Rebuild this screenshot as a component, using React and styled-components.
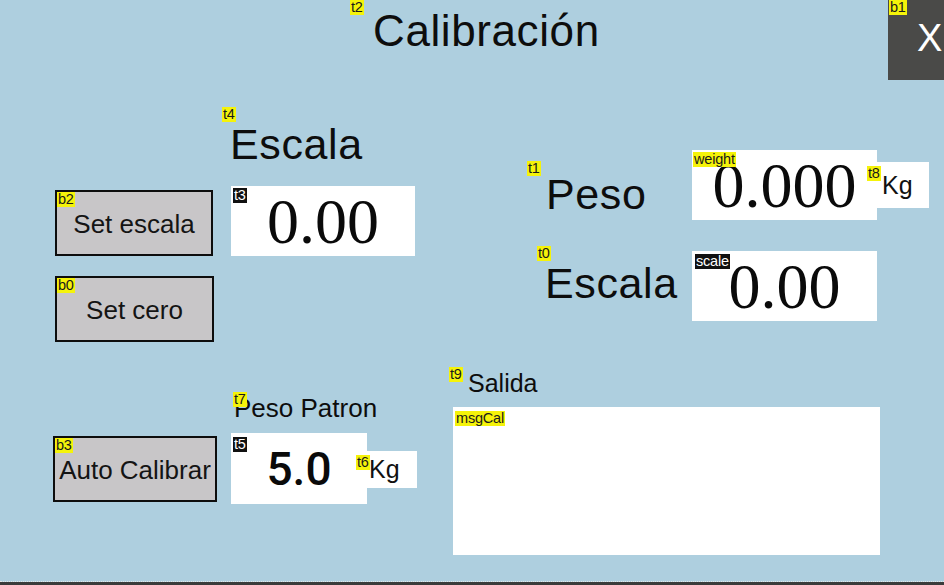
import React from "react";
import styled, { createGlobalStyle } from "styled-components";

const Global = createGlobalStyle`
  html, body { margin: 0; padding: 0; background: #3b3b3b; }
  body { width: 944px; height: 585px; overflow: hidden; font-family: "Liberation Sans", Arial, sans-serif; }
`;

const Page = styled.div`
  width: 944px;
  height: 585px;
  display: flex;
  flex-direction: column;
  background: #3b3b3b;
`;

const Canvas = styled.div`
  width: 944px;
  height: 581px;
  flex: none;
  display: flex;
  flex-direction: column;
  background: #aecfdf;
  border-bottom: 1px dotted #e6e6e6;
  overflow: hidden;
`;

const Header = styled.header`
  height: 107px;
  flex: none;
  display: flex;
  align-items: flex-start;
  padding-left: 350px;
`;

const Body = styled.main`
  flex: 1;
  display: flex;
  align-items: flex-start;
  padding-left: 53px;
`;

const LeftColumn = styled.section`
  width: 164px;
  display: flex;
  flex-direction: column;
  align-items: flex-start;
  gap: 20px;
  padding-top: 83px;
`;

const MiddleColumn = styled.section`
  width: 195px;
  margin-left: 5px;
  display: flex;
  flex-direction: column;
  align-items: flex-start;
`;

const RightColumn = styled.section`
  margin-left: 32px;
  width: 480px;
  display: flex;
  flex-direction: column;
  align-items: flex-start;
`;

const ReadingRow = styled.div`
  display: grid;
  grid-template-columns: 243px 185px 52px;
  align-items: start;
  margin-top: ${(p) => p.$mt}px;
`;

const UnitRow = styled.div`
  display: flex;
  align-items: flex-start;
  margin: 12px 0 0 9px;
`;

/* Editor id tag drawn over the top-left corner of each widget */
const Badge = styled.span`
  position: absolute;
  left: ${(p) => p.$l ?? 0}px;
  top: ${(p) => p.$t ?? 0}px;
  padding: 0 1px;
  height: 15px;
  line-height: 15px;
  font-family: "Liberation Sans", Arial, sans-serif;
  font-size: 14.5px;
  letter-spacing: -0.2px;
  background: ${(p) => (p.$dark ? "#111" : "#f5f30a")};
  color: ${(p) => (p.$dark ? "#fff" : "#1a1a1a")};
  z-index: 2;
  white-space: nowrap;
`;

const Label = styled.div`
  position: relative;
  padding: ${(p) => p.$pt}px 0 0 ${(p) => p.$pl}px;
  margin: ${(p) => p.$m ?? "0"};
  font-size: ${(p) => p.$fs}px;
  line-height: 1;
  color: #0d0d0d;
  white-space: nowrap;
  letter-spacing: ${(p) => p.$ls ?? 0}px;
`;

const ValueBox = styled.div`
  position: relative;
  width: ${(p) => p.$w}px;
  height: ${(p) => p.$h}px;
  margin: ${(p) => p.$m ?? "0"};
  background: #fff;
  display: flex;
  align-items: center;
  justify-content: center;
  white-space: nowrap;
`;

const SerifNumber = styled.span`
  font-family: "Liberation Serif", "Times New Roman", serif;
  font-size: 64px;
  line-height: 1;
  color: #0a0a0a;
  padding-top: 2px;
`;

const SansNumber = styled.span`
  font-family: Roboto, "Liberation Sans", sans-serif;
  font-weight: 500;
  font-size: 46px;
  line-height: 1;
  color: #0a0a0a;
`;

const UnitBox = styled.div`
  position: relative;
  width: ${(p) => p.$w}px;
  height: ${(p) => p.$h}px;
  margin-top: ${(p) => p.$mt}px;
  background: #fff;
  display: flex;
  align-items: center;
  padding-left: ${(p) => p.$pl}px;
  box-sizing: border-box;
  font-size: 25px;
  line-height: 1;
  color: #111;
`;

const Button = styled.button`
  position: relative;
  width: ${(p) => p.$w}px;
  height: 66px;
  margin: ${(p) => p.$m ?? "0"};
  box-sizing: border-box;
  background: #c8c6c8;
  border: 2px solid #0d0d0d;
  border-radius: 0;
  display: flex;
  align-items: center;
  justify-content: center;
  padding: 3px 0 0;
  font-family: "Liberation Sans", Arial, sans-serif;
  font-size: 26px;
  color: #141414;
  white-space: nowrap;
`;

const CloseButton = styled.button`
  position: relative;
  margin-left: auto;
  width: 56px;
  height: 80px;
  background: #4a4a48;
  border: none;
  border-radius: 0;
  display: flex;
  align-items: center;
  padding: 0 0 4px 29px;
  font-family: "Liberation Sans", Arial, sans-serif;
  font-size: 38px;
  color: #fff;
`;

const MessageBox = styled.div`
  position: relative;
  width: 427px;
  height: 148px;
  margin: 11px 0 0 4px;
  background: #fff;
`;

export default function App() {
  return (
    <>
      <Global />
      <Page>
        <Canvas>
          <Header>
            <Label $pl={23} $pt={9} $fs={44} $ls={0.6}>
              <Badge>t2</Badge>
              Calibración
            </Label>
            <CloseButton>
              <Badge $l={1}>b1</Badge>
              X
            </CloseButton>
          </Header>

          <Body>
            <LeftColumn>
              <Button $w={158} $m="0 0 0 2px">
                <Badge>b2</Badge>
                Set escala
              </Button>
              <Button $w={159} $m="0 0 0 2px">
                <Badge>b0</Badge>
                Set cero
              </Button>
              <Button $w={164} $m="74px 0 0 0">
                <Badge>b3</Badge>
                Auto Calibrar
              </Button>
            </LeftColumn>

            <MiddleColumn>
              <Label $pl={8} $pt={16} $fs={43} $ls={0.6}>
                <Badge>t4</Badge>
                Escala
              </Label>
              <ValueBox $w={184} $h={70} $m="20px 0 0 9px">
                <Badge $dark $l={2} $t={2}>t3</Badge>
                <SerifNumber>0.00</SerifNumber>
              </ValueBox>
              <Label $pl={1} $pt={3} $fs={26} $m="136px 0 0 11px">
                <Badge>t7</Badge>
                Peso Patron
              </Label>
              <UnitRow>
                <ValueBox $w={136} $h={71}>
                  <Badge $dark $l={2} $t={4}>t5</Badge>
                  <SansNumber>5.0</SansNumber>
                </ValueBox>
                <UnitBox $w={50} $h={37} $mt={18} $pl={2}>
                  <Badge $l={-11} $t={4}>t6</Badge>
                  Kg
                </UnitBox>
              </UnitRow>
            </MiddleColumn>

            <RightColumn>
              <ReadingRow $mt={43}>
                <Label $pl={19} $pt={12} $fs={43} $ls={0.6} $m="11px 0 0 78px">
                  <Badge>t1</Badge>
                  Peso
                </Label>
                <ValueBox $w={185} $h={70}>
                  <Badge $l={1} $t={2}>weight</Badge>
                  <SerifNumber>0.000</SerifNumber>
                </ValueBox>
                <UnitBox $w={52} $h={46} $mt={12} $pl={5}>
                  <Badge $l={-10} $t={4}>t8</Badge>
                  Kg
                </UnitBox>
              </ReadingRow>

              <ReadingRow $mt={26}>
                <Label $pl={8} $pt={16} $fs={43} $ls={0.6} $m="0 0 0 88px">
                  <Badge>t0</Badge>
                  Escala
                </Label>
                <ValueBox $w={185} $h={70} $m="5px 0 0 0">
                  <Badge $dark $l={3} $t={3}>scale</Badge>
                  <SerifNumber>0.00</SerifNumber>
                </ValueBox>
              </ReadingRow>

              <Label $pl={19} $pt={4} $fs={25} $m="46px 0 0 0">
                <Badge>t9</Badge>
                Salida
              </Label>
              <MessageBox>
                <Badge $l={2} $t={4}>msgCal</Badge>
              </MessageBox>
            </RightColumn>
          </Body>
        </Canvas>
      </Page>
    </>
  );
}
